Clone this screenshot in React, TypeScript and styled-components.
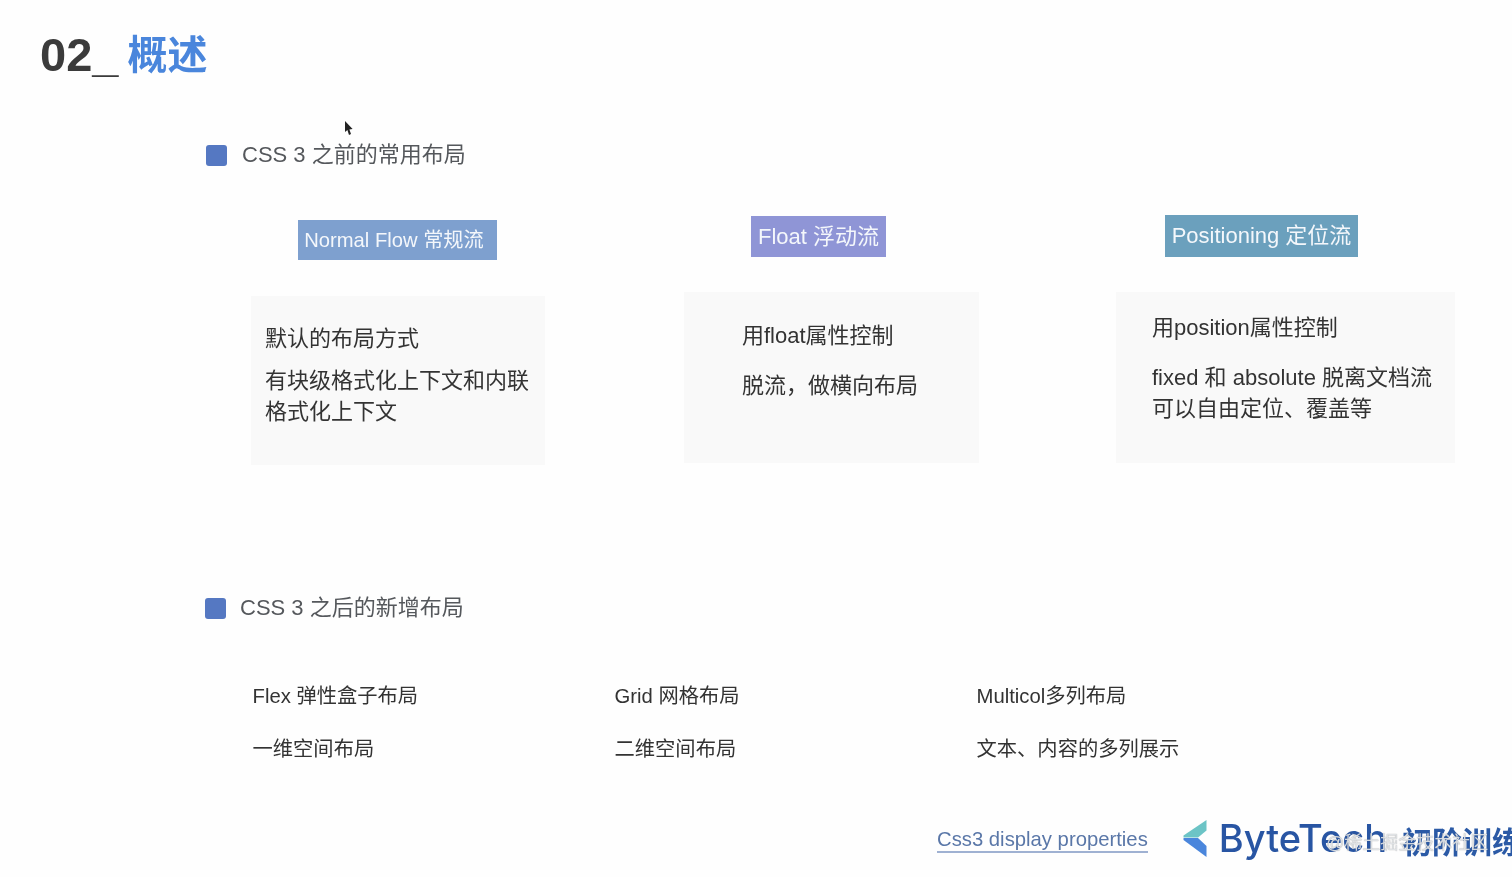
import React from "react";
import styled, { createGlobalStyle } from "styled-components";

const FONT = `"Liberation Sans", "Noto Sans CJK SC", sans-serif`;

const Global = createGlobalStyle`
  html, body { margin: 0; padding: 0; background: #fefefe; overflow: hidden; }
  body { font-family: ${FONT}; }
`;

const Slide = styled.main`
  position: relative;
  width: 1512px;
  height: 877px;
  overflow: hidden;
  background: #fefefe;
  color: #333;
  filter: blur(0.55px);
  display: flex;
  flex-direction: column;
`;

const Title = styled.h1`
  margin: 28px 0 0 40px;
  height: 54px;
  display: flex;
  align-items: center;
  font-size: 47px;
  line-height: 54px;
  font-weight: 700;
  color: #3b3b3b;
`;

const TitleAccent = styled.span`
  margin-left: 9px;
  font-size: 40px;
  font-weight: 700;
  color: #4a86dc;
`;

const SectionHead = styled.div<{ $left: number; $top: number; $gap: number }>`
  display: flex;
  align-items: center;
  gap: ${(p) => p.$gap}px;
  height: 24px;
  margin: ${(p) => p.$top}px 0 0 ${(p) => p.$left}px;
  font-size: 22px;
  line-height: 24px;
  color: #55585c;
`;

const Bullet = styled.i`
  width: 21px;
  height: 21px;
  border-radius: 3px;
  background: #5578c2;
`;

const Columns = styled.div`
  display: flex;
  align-items: flex-start;
  margin: 49px 0 0 251px;
`;

const Column = styled.section<{ $width: number; $gap: number; $shift: number }>`
  width: ${(p) => p.$width}px;
  margin-left: ${(p) => p.$gap}px;
  margin-top: ${(p) => p.$shift}px;
  display: flex;
  flex-direction: column;
`;

const Tag = styled.div<{ $bg: string; $left: number; $width: number; $height: number; $size: number; $inset: number }>`
  box-sizing: border-box;
  width: ${(p) => p.$width}px;
  height: ${(p) => p.$height}px;
  margin-left: ${(p) => p.$left}px;
  padding-right: ${(p) => p.$inset}px;
  background: ${(p) => p.$bg};
  color: #f4f7fb;
  font-size: ${(p) => p.$size}px;
  line-height: ${(p) => p.$height}px;
  text-align: center;
  white-space: nowrap;
`;

const Card = styled.div<{ $top: number; $height: number; $padTop: number; $padLeft: number }>`
  box-sizing: border-box;
  height: ${(p) => p.$height}px;
  margin-top: ${(p) => p.$top}px;
  padding: ${(p) => p.$padTop}px 8px 0 ${(p) => p.$padLeft}px;
  background: #f9f9f9;
  color: #333;
  font-size: 22px;
  line-height: 31px;
`;

const CardLine = styled.p<{ $top: number }>`
  margin: ${(p) => p.$top}px 0 0;
`;

const LowerGrid = styled.div`
  display: grid;
  grid-template-columns: repeat(3, 362px);
  margin: 62px 0 0 252.5px;
`;

const LowerItem = styled.div`
  display: flex;
  flex-direction: column;
  gap: 24px;
  font-size: 20.3px;
  line-height: 29px;
  color: #333;
`;

const Footer = styled.footer`
  display: flex;
  align-items: center;
  height: 44px;
  margin: 52px 0 0 937px;
  white-space: nowrap;
`;

const DocLink = styled.a`
  margin-top: 4px;
  font-size: 20.3px;
  line-height: 23px;
  color: #5a77a8;
  border-bottom: 2px solid #9fb1d2;
`;

const LogoMark = styled.svg`
  margin-left: 35px;
  flex: none;
`;

const Brand = styled.span`
  margin-left: 12px;
  font-family: "Inter", sans-serif;
  font-size: 38px;
  font-weight: 500;
  color: #2855a3;
`;

const BrandSub = styled.span`
  margin-left: 15px;
  margin-top: 4px;
  font-size: 30px;
  font-weight: 700;
  color: #2b5aa6;
`;

const Watermark = styled.div`
  position: absolute;
  left: 1326px;
  top: 830px;
  font-size: 18px;
  line-height: 26px;
  white-space: nowrap;
  color: rgba(235, 238, 242, 0.85);
  text-shadow: 0 0 1px rgba(90, 90, 90, 0.7);
`;

const Pointer = styled.svg`
  position: absolute;
  left: 344px;
  top: 121px;
`;

export default function App() {
  return (
    <>
      <Global />
      <Slide>
        <Title>
          02_<TitleAccent>概述</TitleAccent>
        </Title>

        <SectionHead $left={206} $top={61} $gap={15}>
          <Bullet />
          CSS 3 之前的常用布局
        </SectionHead>

        <Columns>
          <Column $width={294} $gap={0} $shift={4}>
            <Tag $bg="#7ea0cf" $left={47} $width={199} $height={40} $size={20.2} $inset={7}>Normal Flow 常规流</Tag>
            <Card $top={36} $height={169} $padTop={27} $padLeft={14}>
              <CardLine $top={0}>默认的布局方式</CardLine>
              <CardLine $top={11}>有块级格式化上下文和内联<br />格式化上下文</CardLine>
            </Card>
          </Column>
          <Column $width={295} $gap={139} $shift={0}>
            <Tag $bg="#8f95d6" $left={67} $width={135} $height={41} $size={22} $inset={0}>Float 浮动流</Tag>
            <Card $top={35} $height={171} $padTop={28} $padLeft={58}>
              <CardLine $top={0}>用float属性控制</CardLine>
              <CardLine $top={19}>脱流，做横向布局</CardLine>
            </Card>
          </Column>
          <Column $width={339} $gap={137} $shift={-1}>
            <Tag $bg="#6ba0bd" $left={49} $width={193} $height={42} $size={22} $inset={0}>Positioning 定位流</Tag>
            <Card $top={35} $height={171} $padTop={20} $padLeft={36}>
              <CardLine $top={0}>用position属性控制</CardLine>
              <CardLine $top={19}>fixed 和 absolute 脱离文档流<br />可以自由定位、覆盖等</CardLine>
            </Card>
          </Column>
        </Columns>

        <SectionHead $left={205} $top={131} $gap={14}>
          <Bullet />
          CSS 3 之后的新增布局
        </SectionHead>

        <LowerGrid>
          <LowerItem>
            <span>Flex 弹性盒子布局</span>
            <span>一维空间布局</span>
          </LowerItem>
          <LowerItem>
            <span>Grid 网格布局</span>
            <span>二维空间布局</span>
          </LowerItem>
          <LowerItem>
            <span>Multicol多列布局</span>
            <span>文本、内容的多列展示</span>
          </LowerItem>
        </LowerGrid>

        <Footer>
          <DocLink>Css3 display properties</DocLink>
          <LogoMark width="24" height="37" viewBox="0 0 24 37" aria-hidden="true">
            <path d="M23.5 0 V10.5 L15 17.5 L0.5 17.5 V15.5 Z" fill="#6cc4c6" />
            <path d="M0.5 18 H15 L23.5 26 V37 L0.5 20 Z" fill="#4a86dc" />
          </LogoMark>
          <Brand>ByteTech</Brand>
          <BrandSub>初阶训练营</BrandSub>
        </Footer>

        <Watermark>@稀土掘金技术社区</Watermark>

        <Pointer width="10" height="16" viewBox="0 0 10 16" aria-hidden="true">
          <path d="M1 0 V11 L3.4 9 L5 14 L7 13 L5.4 8.4 L8.6 8 Z" fill="#222" />
        </Pointer>
      </Slide>
    </>
  );
}
